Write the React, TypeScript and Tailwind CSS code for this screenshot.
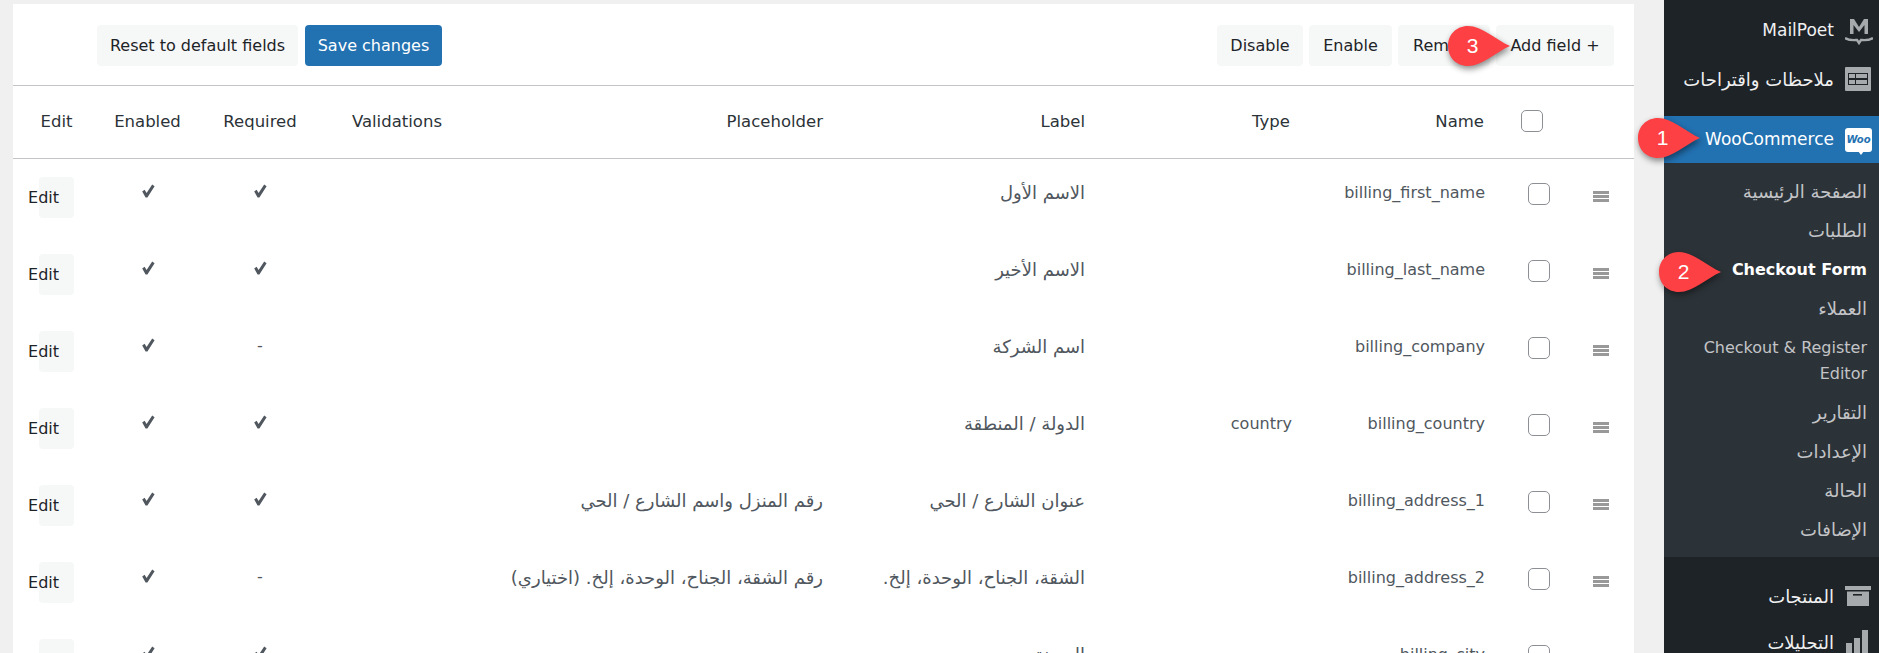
// Checkout form fields screen (RTL WooCommerce admin) with numbered callouts
const font = "font-['DejaVu_Sans',sans-serif]";
const gridCols = 'grid grid-cols-[87px_95px_130px_130px_380px_265px_200px_200px_65px_69px]';

type Field = {
    name: string;
    type?: string;
    label: string;
    placeholder?: string;
    required: boolean;
};

const fields: Field[] = [
    { name: 'billing_first_name', label: 'الاسم الأول', required: true },
    { name: 'billing_last_name', label: 'الاسم الأخير', required: true },
    { name: 'billing_company', label: 'اسم الشركة', required: false },
    { name: 'billing_country', type: 'country', label: 'الدولة / المنطقة', required: true },
    { name: 'billing_address_1', label: 'عنوان الشارع / الحي', placeholder: 'رقم المنزل واسم الشارع / الحي', required: true },
    { name: 'billing_address_2', label: 'الشقة، الجناح، الوحدة، إلخ.', placeholder: 'رقم الشقة، الجناح، الوحدة، إلخ. (اختياري)', required: false },
    { name: 'billing_city', label: 'المدينة', required: true },
];

function Check() {
    return (
        <svg width="16" height="16" viewBox="0 0 16 16" className="mx-auto">
            <path d="M2.2 8.6 L4.6 6.8 L6.6 10 L12.2 1.6 L14.6 3.2 L7.4 14.6 L5.6 14.6 Z" fill="#50575e" />
        </svg>
    );
}

function Box({ className = '' }: { className?: string }) {
    return <span className={`block w-[22px] h-[22px] rounded-[5px] border border-[#8c8f94] bg-white ${className}`} />;
}

function ToolButton({ children, className = '' }: { children: React.ReactNode; className?: string }) {
    return (
        <button className={`h-[41px] pt-[1px] rounded-[4px] bg-[#f6f7f7] text-[#1d2327] text-[16px] whitespace-nowrap ${className}`}>
            {children}
        </button>
    );
}

function Row({ field }: { field: Field }) {
    return (
        <div className={`${gridCols} h-[77px] text-[16px] leading-[24px] text-[#50575e]`}>
            <div className="pt-[18px] pl-[26px]">
                <button className="flex justify-end w-[35px] h-[41px] pr-[15px] pt-[9px] rounded-[4px] bg-[#f6f7f7] text-[#1d2327] leading-[24px]">
                    <span>Edit</span>
                </button>
            </div>
            <div className="pt-[24px]"><Check /></div>
            <div className="pt-[24px] text-center">{field.required ? <Check /> : <span className="block -mt-[3px]">-</span>}</div>
            <div />
            <div dir="rtl" className="pt-[22px] pr-[12px] text-right text-[18px] whitespace-nowrap">{field.placeholder}</div>
            <div dir="rtl" className="pt-[22px] pr-[15px] text-right text-[18px] whitespace-nowrap">{field.label}</div>
            <div className="pt-[22px] pr-[8px] text-right">{field.type}</div>
            <div className="pt-[22px] pr-[15px] text-right">{field.name}</div>
            <div className="pt-[24px] pl-[28px]"><Box /></div>
            <div className="pt-[32px] pl-[28px]">
                <span className="flex flex-col gap-[1px] w-[16px]">
                    <span className="h-[3px] bg-[#999999]" />
                    <span className="h-[3px] bg-[#999999]" />
                    <span className="h-[3px] bg-[#999999]" />
                </span>
            </div>
        </div>
    );
}

function Callout({ n, className }: { n: number; className: string }) {
    return (
        <div className={`absolute w-[62px] h-[40px] z-10 ${className}`}>
            <svg width="62" height="40" viewBox="0 0 62 40" className="drop-shadow-[1px_3px_3px_rgba(0,0,0,0.45)]">
                <path d="M20 0 C34 0 48 14 62 20 C48 26 34 40 20 40 C8 40 0 31 0 20 C0 9 8 0 20 0 Z" fill="#fd4044" />
            </svg>
            <span className="absolute left-0 top-0 w-[49px] h-[40px] flex items-center justify-center text-white text-[21px] font-['Liberation_Sans',sans-serif]">
                {n}
            </span>
        </div>
    );
}

function MenuItem({ label, icon, className = '' }: { label: string; icon: React.ReactNode; className?: string }) {
    return (
        <div className={`flex items-center justify-end text-[#f0f0f1] ${className}`}>
            <span dir="rtl" className="whitespace-nowrap">{label}</span>
            <span className="w-[45px] flex justify-start pl-[11px]">{icon}</span>
        </div>
    );
}

function SubItem({ children, active = false, ar = false }: { children: React.ReactNode; active?: boolean; ar?: boolean }) {
    return (
        <div
            dir="rtl"
            className={`py-[6.5px] pr-[12px] pl-[16px] leading-[26px] ${ar ? 'text-[18px]' : 'text-[16px]'} ${active ? 'text-white font-bold' : 'text-[#c3c4c7]'}`}
        >
            {children}
        </div>
    );
}

function Sidebar() {
    return (
        <aside className="w-[215px] shrink-0 bg-[#1d2327]">
            <MenuItem
                label="MailPoet"
                className="h-[62px] text-[17px]"
                icon={
                    <svg width="28" height="28" viewBox="0 0 28 28">
                        <path d="M5 17 V2 H9 L14 10 L19 2 H23 V17 H19.5 V8 L14 15 L8.5 8 V17 Z" fill="#a7aaad" />
                        <path d="M0 21 C5 24 10 23 12 23 L14 26 L16 23 C18 23 23 24 28 21" fill="none" stroke="#a7aaad" strokeWidth="2.4" />
                    </svg>
                }
            />
            <MenuItem
                label="ملاحظات واقتراحات"
                className="h-[34px] text-[18px]"
                icon={
                    <svg width="26" height="24" viewBox="0 0 26 24">
                        <rect width="26" height="24" rx="1" fill="#a7aaad" />
                        <rect x="3" y="6" width="20" height="12" fill="#1d2327" />
                        <rect x="4" y="7" width="6" height="4" fill="#a7aaad" />
                        <rect x="4" y="13" width="6" height="4" fill="#a7aaad" />
                        <rect x="11" y="7" width="11" height="4" fill="#a7aaad" />
                        <rect x="11" y="13" width="11" height="4" fill="#a7aaad" />
                    </svg>
                }
            />
            <div className="h-[20px]" />
            <MenuItem
                label="WooCommerce"
                className="h-[47px] bg-[#2271b1] !text-white text-[17px]"
                icon={
                    <span className="relative flex items-center justify-center w-[27px] h-[24px] rounded-[3px] bg-white text-[#2271b1] text-[10px] font-bold italic leading-none">
                        Woo
                        <span className="absolute left-[13px] top-[23px] w-0 h-0 border-x-[3px] border-x-transparent border-t-[4px] border-t-white" />
                    </span>
                }
            />
            <div className="bg-[#2c3338] h-[394px] pt-[9px]">
                <SubItem ar>الصفحة الرئيسية</SubItem>
                <SubItem ar>الطلبات</SubItem>
                <SubItem active>Checkout Form</SubItem>
                <SubItem ar>العملاء</SubItem>
                <SubItem>Checkout &amp; Register Editor</SubItem>
                <SubItem ar>التقارير</SubItem>
                <SubItem ar>الإعدادات</SubItem>
                <SubItem ar>الحالة</SubItem>
                <SubItem ar>الإضافات</SubItem>
            </div>
            <div className="h-[20px]" />
            <MenuItem
                label="المنتجات"
                className="h-[38px] text-[18px]"
                icon={
                    <svg width="26" height="20" viewBox="0 0 26 20">
                        <rect width="26" height="4" fill="#a7aaad" />
                        <path d="M2 5.5 H24 V20 H2 Z" fill="#a7aaad" />
                        <rect x="8" y="8" width="9" height="1.6" fill="#1d2327" />
                    </svg>
                }
            />
            <MenuItem
                label="التحليلات"
                className="h-[54px] text-[18px]"
                icon={
                    <svg width="24" height="24" viewBox="0 0 24 24">
                        <rect x="1" y="13" width="6" height="11" fill="#a7aaad" />
                        <rect x="9" y="8" width="6" height="16" fill="#a7aaad" />
                        <rect x="17" y="0" width="6" height="24" fill="#a7aaad" />
                    </svg>
                }
            />
        </aside>
    );
}

export default function App() {
    return (
        <div className={`relative flex justify-end w-[1879px] h-[653px] overflow-hidden bg-[#f0f0f1] ${font}`}>
            <div className="flex-1 min-w-0 pl-[13px] pr-[30px] pt-[4px]">
                <main className="h-full bg-white overflow-hidden">
                    {/* Toolbar */}
                    <div className="flex items-start justify-between h-[82px] pt-[21px] pl-[84px] pr-[20px] border-b border-[#c3c4c7]">
                        <div className="flex gap-[7px]">
                            <ToolButton className="w-[201px]">Reset to default fields</ToolButton>
                            <ToolButton className="w-[137px] !bg-[#2271b1] !text-white">Save changes</ToolButton>
                        </div>
                        <div className="flex gap-[6px]">
                            <ToolButton className="w-[86px]">Disable</ToolButton>
                            <ToolButton className="w-[83px]">Enable</ToolButton>
                            <ToolButton className="w-[92px] text-left pl-[15px]">Remove</ToolButton>
                            <ToolButton className="w-[118px]">Add field +</ToolButton>
                        </div>
                    </div>

                    {/* Header */}
                    <div className={`${gridCols} h-[73px] pt-[1px] items-center border-b border-[#c3c4c7] text-[16.5px] text-[#2c3338]`}>
                        <div className="text-center">Edit</div>
                        <div className="text-center">Enabled</div>
                        <div className="text-center">Required</div>
                        <div className="pr-[13px] text-right">Validations</div>
                        <div className="pr-[12px] text-right">Placeholder</div>
                        <div className="pr-[15px] text-right">Label</div>
                        <div className="pr-[10px] text-right">Type</div>
                        <div className="pr-[16px] text-right">Name</div>
                        <div className="pl-[21px]"><Box className="-mt-[3px]" /></div>
                        <div />
                    </div>

                    {/* Rows */}
                    {fields.map(field => (
                        <Row key={field.name} field={field} />
                    ))}
                </main>
            </div>
            <Sidebar />

            <Callout n={1} className="left-[1638px] top-[118px]" />
            <Callout n={2} className="left-[1659px] top-[252px]" />
            <Callout n={3} className="left-[1448px] top-[26px]" />
        </div>
    );
}
